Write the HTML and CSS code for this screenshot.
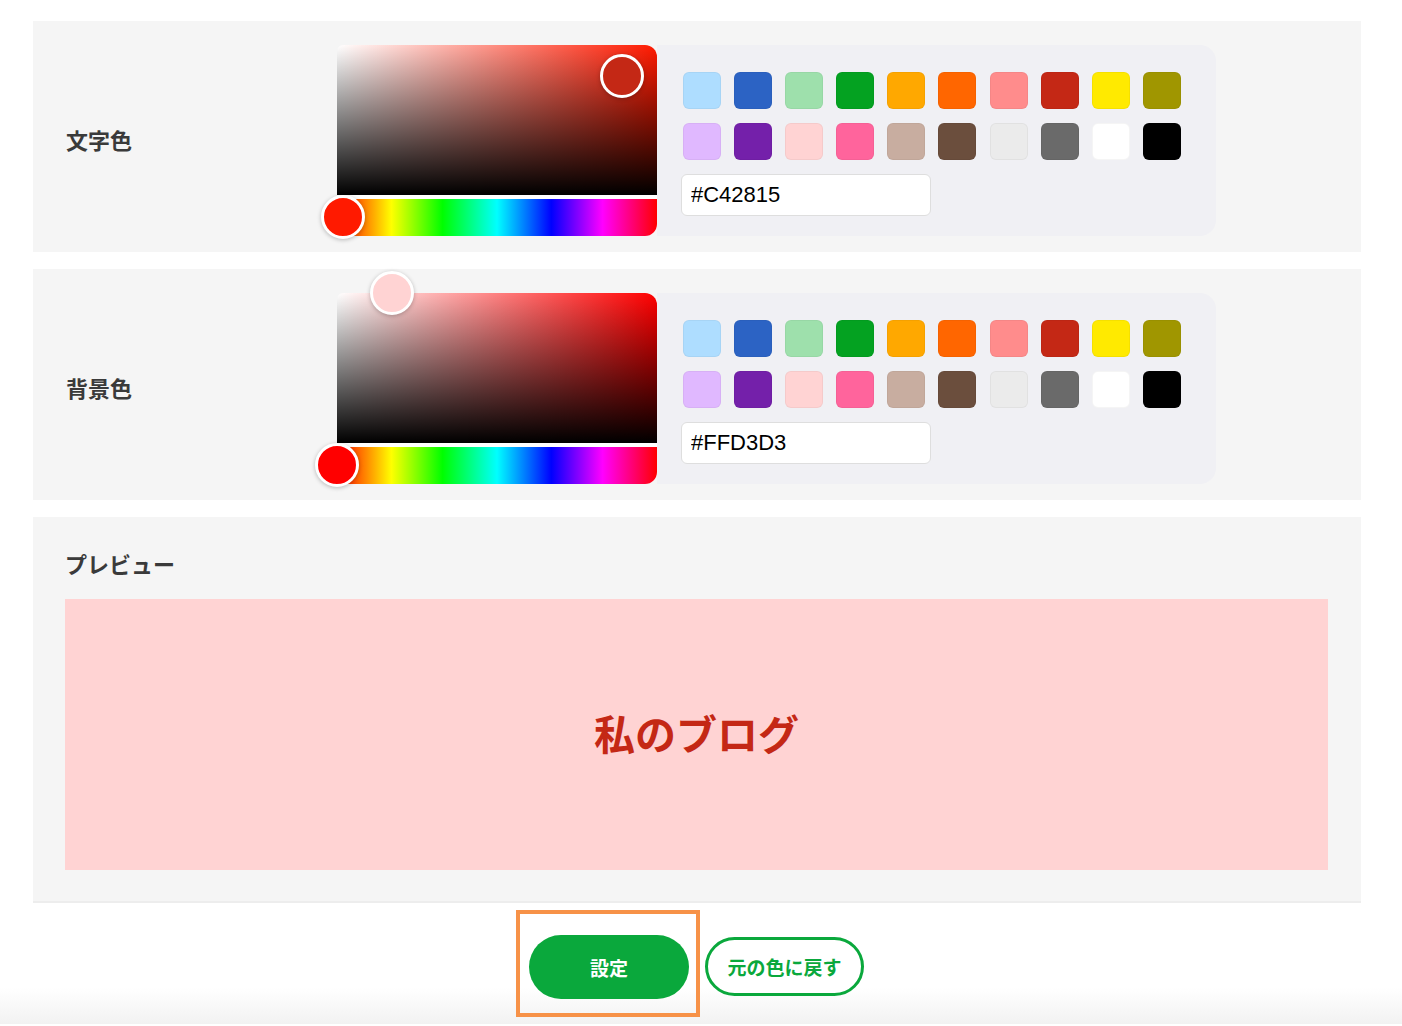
FILE: index.html
```html
<!DOCTYPE html>
<html lang="ja">
<head>
  <meta charset="UTF-8" />
  <meta name="viewport" content="width=device-width, initial-scale=1.0"/>
  <title>カラー設定</title>
  <link rel="stylesheet" href="styles.css">
</head>
<body>
  <div class="settings">
    <div class="panel row">
      <p class="label">文字色</p>
      <div class="picker">
        <div class="picker-main">
          <div class="sat" style="--hue: hsl(6, 100%, 50%)">
            <span class="handle" style="left: 285px; top: 31px; background: #C42815"></span>
          </div>
          <div class="hue">
            <span class="handle hue-handle" style="left: 6px; background: #ff1a00"></span>
          </div>
        </div>
        <div class="swatches">
          <div class="grid">
            <span style="background:#aeddff"></span>
            <span style="background:#2c63c4"></span>
            <span style="background:#9ee0ac"></span>
            <span style="background:#04a221"></span>
            <span style="background:#ffa800"></span>
            <span style="background:#ff6600"></span>
            <span style="background:#ff8c8c"></span>
            <span style="background:#c42815"></span>
            <span style="background:#ffea00"></span>
            <span style="background:#a09600"></span>
            <span style="background:#e0b8ff"></span>
            <span style="background:#7420aa"></span>
            <span style="background:#ffd3d3"></span>
            <span style="background:#ff649c"></span>
            <span style="background:#c8ada0"></span>
            <span style="background:#6b4e3d"></span>
            <span style="background:#ebebeb"></span>
            <span style="background:#6a6a6a"></span>
            <span style="background:#ffffff"></span>
            <span style="background:#000000"></span>
          </div>
          <input type="text" value="#C42815" spellcheck="false" />
        </div>
      </div>
    </div>

    <div class="panel row">
      <p class="label">背景色</p>
      <div class="picker">
        <div class="picker-main">
          <div class="sat" style="--hue: hsl(0, 100%, 50%)">
            <span class="handle" style="left: 55px; top: 0px; background: #FFD3D3"></span>
          </div>
          <div class="hue">
            <span class="handle hue-handle" style="left: 0px; background: #ff0000"></span>
          </div>
        </div>
        <div class="swatches">
          <div class="grid">
            <span style="background:#aeddff"></span>
            <span style="background:#2c63c4"></span>
            <span style="background:#9ee0ac"></span>
            <span style="background:#04a221"></span>
            <span style="background:#ffa800"></span>
            <span style="background:#ff6600"></span>
            <span style="background:#ff8c8c"></span>
            <span style="background:#c42815"></span>
            <span style="background:#ffea00"></span>
            <span style="background:#a09600"></span>
            <span style="background:#e0b8ff"></span>
            <span style="background:#7420aa"></span>
            <span style="background:#ffd3d3"></span>
            <span style="background:#ff649c"></span>
            <span style="background:#c8ada0"></span>
            <span style="background:#6b4e3d"></span>
            <span style="background:#ebebeb"></span>
            <span style="background:#6a6a6a"></span>
            <span style="background:#ffffff"></span>
            <span style="background:#000000"></span>
          </div>
          <input type="text" value="#FFD3D3" spellcheck="false" />
        </div>
      </div>
    </div>

    <div class="panel preview-panel">
      <p class="label">プレビュー</p>
      <div class="preview">
        <h1>私のブログ</h1>
      </div>
    </div>
  </div>

  <div class="actions">
    <div class="highlight">
      <button class="btn btn-primary">設定</button>
    </div>
    <button class="btn btn-outline">元の色に戻す</button>
  </div>
</body>
</html>
```

FILE: styles.css
```css
* {
  margin: 0;
  padding: 0;
  box-sizing: border-box;
  font-family: "Noto Sans CJK JP", "Noto Sans", sans-serif;
}

body {
  background: #fff;
  color: #333;
}

.settings {
  width: 1328px;
  margin: 21px 0 0 33px;
  display: flex;
  flex-direction: column;
  gap: 17px;
  border-bottom: 2px solid #ededed;
}

.panel {
  background: #f5f5f5;
}

.row {
  display: grid;
  grid-template-columns: 271px auto;
  align-items: center;
  padding: 24px 0 16px 33px;
}

.label {
  font-size: 22px;
  font-weight: 700;
  line-height: 26px;
  color: #3a3a3a;
}

.row .label {
  padding-bottom: 4px;
}

.picker {
  display: flex;
}

.picker-main {
  width: 320px;
  display: flex;
  flex-direction: column;
  gap: 4px;
  background: #fff;
  border-radius: 12px;
}

.sat {
  position: relative;
  height: 150px;
  border-radius: 6px 12px 0 0;
  background: linear-gradient(to top, #000, rgba(0, 0, 0, 0)),
              linear-gradient(to right, #fff, var(--hue));
}

.hue {
  position: relative;
  height: 37px;
  border-radius: 0 0 12px 0;
  background: linear-gradient(to right, #f00 0%, #ff0 17%, #0f0 33%, #0ff 50%, #00f 67%, #f0f 83%, #f00 100%);
}

.handle {
  position: absolute;
  width: 44px;
  height: 44px;
  border-radius: 50%;
  border: 3px solid #fff;
  transform: translate(-50%, -50%);
  box-shadow: 0 1px 4px rgba(0, 0, 0, 0.25);
}

.hue-handle {
  top: 18px;
}

.swatches {
  width: 559px;
  background: #f0f0f4;
  border-radius: 0 16px 16px 0;
  padding: 27px 0 20px 26px;
}

.grid {
  display: grid;
  grid-template-columns: repeat(10, 38px);
  grid-auto-rows: 37px;
  column-gap: 13.1px;
  row-gap: 14px;
}

.grid span {
  border-radius: 6px;
  border: 1px solid rgba(0, 0, 0, 0.04);
}

.swatches input {
  display: block;
  width: 250px;
  height: 42px;
  margin: 14px 0 0 -2px;
  padding: 0 9px;
  font-family: "Liberation Sans", Arial, sans-serif;
  font-size: 22px;
  color: #000;
  background: #fff;
  border: 1px solid #dedede;
  border-radius: 6px;
  outline: none;
}

.preview-panel {
  padding: 33px 33px 31px 32px;
}

.preview-panel .label {
  margin-bottom: 23px;
}

.preview {
  height: 271px;
  padding-bottom: 6px;
  background: #ffd3d3;
  display: flex;
  align-items: center;
  justify-content: center;
}

.preview h1 {
  font-size: 41px;
  font-weight: 700;
  color: #c42815;
}

.actions {
  height: 121px;
  padding: 7px 22px 0 0;
  display: flex;
  justify-content: center;
  align-items: flex-start;
  gap: 5px;
  background: linear-gradient(to bottom, #fff 70%, #f2f2f2 100%);
}

.highlight {
  border: 4px solid #f79248;
  padding: 21px 7px 14px 9px;
}

.btn {
  font-family: "Noto Sans CJK JP", sans-serif;
  font-weight: 700;
  border-radius: 40px;
  cursor: pointer;
}

.btn-primary {
  width: 160px;
  height: 64px;
  background: #0aa83c;
  color: #fff;
  border: none;
  font-size: 19px;
}

.btn-outline {
  width: 159px;
  height: 59px;
  margin-top: 27px;
  background: #fff;
  color: #0aa83c;
  border: 3px solid #0aa83c;
  font-size: 19px;
}
```
